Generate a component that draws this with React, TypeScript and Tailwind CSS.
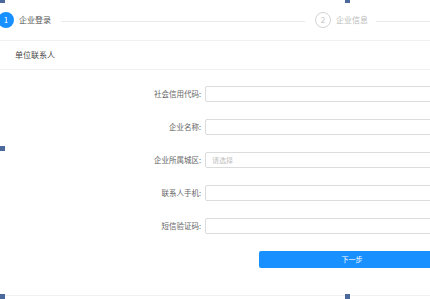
import React from 'react';

const fields = [
  { label: '社会信用代码:', placeholder: '' },
  { label: '企业名称:', placeholder: '' },
  { label: '企业所属城区:', placeholder: '请选择' },
  { label: '联系人手机:', placeholder: '' },
  { label: '短信验证码:', placeholder: '' },
];

const Handle = ({ className = '' }: { className?: string }) => (
  <div className={`absolute w-[5px] h-[5px] bg-[#4b6a9b] ${className}`}></div>
);

export default function App() {
  return (
    <div
      className="relative w-[430px] h-[299px] overflow-hidden bg-white flex flex-col text-[#333]"
      style={{ fontFamily: '"Noto Sans CJK SC", "Noto Sans", sans-serif' }}
    >
      {/* steps */}
      <div className="h-[41px] shrink-0 border-b border-[#f0f0f0] flex items-center">
        <div className="ml-[-2px] w-[16px] h-[16px] rounded-full bg-[#1890ff] text-white text-[8px] flex items-center justify-center leading-none">
          1
        </div>
        <span className="ml-[5px] text-[8px] text-[#555] leading-none">企业登录</span>
        <div className="ml-[10px] mr-[10px] flex-1 h-px bg-[#eaeaea] mt-[2px]"></div>
        <div className="w-[16px] h-[16px] rounded-full border border-[#d4d4d4] text-[#c4c4c4] text-[8px] flex items-center justify-center leading-none">
          2
        </div>
        <span className="ml-[5px] text-[8px] text-[#bbb] leading-none">企业信息</span>
        <div className="ml-[8px] w-[54px] h-px bg-[#eaeaea] mt-[2px]"></div>
      </div>

      {/* section title */}
      <div className="h-[29px] shrink-0 border-b border-[#f0f0f0] pl-[15px] flex items-center">
        <span className="text-[8px] leading-none text-[#444]">单位联系人</span>
      </div>

      {/* form */}
      <div className="h-[225px] shrink-0 pt-[16px] flex flex-col gap-[17px]">
        {fields.map((f) => (
          <div key={f.label} className="flex items-center">
            <label className="w-[201px] shrink-0 text-right text-[7.5px] leading-none text-[#666]">{f.label}</label>
            <div className="ml-[4px] w-[240px] h-[16px] shrink-0 border border-[#dcdcdc] rounded-[2px] flex items-center pl-[6px]">
              <span className="text-[7px] leading-none text-[#c0c0c0]">{f.placeholder}</span>
            </div>
          </div>
        ))}
        <button className="ml-[259px] w-[186px] h-[17px] shrink-0 bg-[#1890ff] rounded-[2px] text-white text-[7px] leading-none flex items-center justify-center">
          下一步
        </button>
      </div>

      <div className="flex-1 border-t border-[#f0f0f0]"></div>

      {/* selection handles */}
      <Handle className="left-0 top-[-2px]" />
      <Handle className="left-[345px] top-[-2px]" />
      <Handle className="left-0 top-[146px]" />
      <Handle className="left-0 top-[294px]" />
      <Handle className="left-[345px] top-[294px]" />
    </div>
  );
}
